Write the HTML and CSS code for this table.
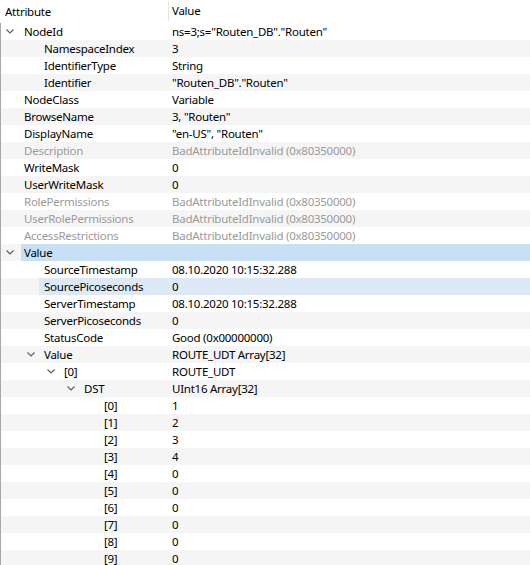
FILE: index.html
```html
<!DOCTYPE html>
<html>
<head>
<meta charset="utf-8">
<link rel="stylesheet" href="styles.css">
</head>
<body>
<div class="tree">
  <div class="header">
    <div class="hcell">Attribute</div>
    <div class="hcell hval">Value</div>
  </div>
  <div class="rows">
    <div class="row l0"><span class="gut"><svg class="chev" width="8" height="5" viewBox="0 0 8 5"><path d="M0.5 0.5 L4 4 L7.5 0.5"/></svg></span><div class="main"><span class="name">NodeId</span><span class="val">ns=3;s="Routen_DB"."Routen"</span></div></div>
    <div class="row l1 alt"><span class="gut"></span><div class="main"><span class="name">NamespaceIndex</span><span class="val">3</span></div></div>
    <div class="row l1"><span class="gut"></span><div class="main"><span class="name">IdentifierType</span><span class="val">String</span></div></div>
    <div class="row l1 alt"><span class="gut"></span><div class="main"><span class="name">Identifier</span><span class="val">"Routen_DB"."Routen"</span></div></div>
    <div class="row l0"><span class="gut"></span><div class="main"><span class="name">NodeClass</span><span class="val">Variable</span></div></div>
    <div class="row l0 alt"><span class="gut"></span><div class="main"><span class="name">BrowseName</span><span class="val">3, "Routen"</span></div></div>
    <div class="row l0"><span class="gut"></span><div class="main"><span class="name">DisplayName</span><span class="val">"en-US", "Routen"</span></div></div>
    <div class="row l0 alt dis"><span class="gut"></span><div class="main"><span class="name">Description</span><span class="val">BadAttributeIdInvalid (0x80350000)</span></div></div>
    <div class="row l0"><span class="gut"></span><div class="main"><span class="name">WriteMask</span><span class="val">0</span></div></div>
    <div class="row l0 alt"><span class="gut"></span><div class="main"><span class="name">UserWriteMask</span><span class="val">0</span></div></div>
    <div class="row l0 dis"><span class="gut"></span><div class="main"><span class="name">RolePermissions</span><span class="val">BadAttributeIdInvalid (0x80350000)</span></div></div>
    <div class="row l0 alt dis"><span class="gut"></span><div class="main"><span class="name">UserRolePermissions</span><span class="val">BadAttributeIdInvalid (0x80350000)</span></div></div>
    <div class="row l0 dis"><span class="gut"></span><div class="main"><span class="name">AccessRestrictions</span><span class="val">BadAttributeIdInvalid (0x80350000)</span></div></div>
    <div class="row l0 alt sel"><span class="gut"><svg class="chev" width="8" height="5" viewBox="0 0 8 5"><path d="M0.5 0.5 L4 4 L7.5 0.5"/></svg></span><div class="main"><span class="name">Value</span><span class="val"></span></div></div>
    <div class="row l1"><span class="gut"></span><div class="main"><span class="name">SourceTimestamp</span><span class="val">08.10.2020 10:15:32.288</span></div></div>
    <div class="row l1 alt hov"><span class="gut"></span><div class="main"><span class="name">SourcePicoseconds</span><span class="val">0</span></div></div>
    <div class="row l1"><span class="gut"></span><div class="main"><span class="name">ServerTimestamp</span><span class="val">08.10.2020 10:15:32.288</span></div></div>
    <div class="row l1 alt"><span class="gut"></span><div class="main"><span class="name">ServerPicoseconds</span><span class="val">0</span></div></div>
    <div class="row l1"><span class="gut"></span><div class="main"><span class="name">StatusCode</span><span class="val">Good (0x00000000)</span></div></div>
    <div class="row l1 alt"><span class="gut"><svg class="chev" width="8" height="5" viewBox="0 0 8 5"><path d="M0.5 0.5 L4 4 L7.5 0.5"/></svg></span><div class="main"><span class="name">Value</span><span class="val">ROUTE_UDT Array[32]</span></div></div>
    <div class="row l2"><span class="gut"><svg class="chev" width="8" height="5" viewBox="0 0 8 5"><path d="M0.5 0.5 L4 4 L7.5 0.5"/></svg></span><div class="main"><span class="name">[0]</span><span class="val">ROUTE_UDT</span></div></div>
    <div class="row l3 alt"><span class="gut"><svg class="chev" width="8" height="5" viewBox="0 0 8 5"><path d="M0.5 0.5 L4 4 L7.5 0.5"/></svg></span><div class="main"><span class="name">DST</span><span class="val">UInt16 Array[32]</span></div></div>
    <div class="row l4"><span class="gut"></span><div class="main"><span class="name">[0]</span><span class="val">1</span></div></div>
    <div class="row l4 alt"><span class="gut"></span><div class="main"><span class="name">[1]</span><span class="val">2</span></div></div>
    <div class="row l4"><span class="gut"></span><div class="main"><span class="name">[2]</span><span class="val">3</span></div></div>
    <div class="row l4 alt"><span class="gut"></span><div class="main"><span class="name">[3]</span><span class="val">4</span></div></div>
    <div class="row l4"><span class="gut"></span><div class="main"><span class="name">[4]</span><span class="val">0</span></div></div>
    <div class="row l4 alt"><span class="gut"></span><div class="main"><span class="name">[5]</span><span class="val">0</span></div></div>
    <div class="row l4"><span class="gut"></span><div class="main"><span class="name">[6]</span><span class="val">0</span></div></div>
    <div class="row l4 alt"><span class="gut"></span><div class="main"><span class="name">[7]</span><span class="val">0</span></div></div>
    <div class="row l4"><span class="gut"></span><div class="main"><span class="name">[8]</span><span class="val">0</span></div></div>
    <div class="row l4 alt"><span class="gut"></span><div class="main"><span class="name">[9]</span><span class="val">0</span></div></div>
  </div>
</div>
</body>
</html>
```

FILE: styles.css
```css
html, body {
  margin: 0;
  padding: 0;
  background: #fff;
}
body {
  font-family: "Noto Sans", "Open Sans", sans-serif;
  font-size: 11.5px;
  letter-spacing: -0.25px;
  color: #000;
  width: 530px;
  height: 565px;
  overflow: hidden;
}
.tree {
  display: flex;
  flex-direction: column;
}
.header {
  display: grid;
  grid-template-columns: 168px 1fr;
  height: 23px;
  align-items: center;
}
.hcell {
  padding-left: 5px;
  line-height: 23px;
  height: 23px;
}
.hval {
  border-left: 1px solid #e5e5e5;
  padding-left: 3px;
  height: 20px;
  line-height: 20px;
  align-self: start;
  margin-top: 1px;
}
.rows {
  border-left: 1px solid #a8a8a8;
}
.row {
  display: flex;
  height: 17px;
  line-height: 17px;
}
.row.alt {
  background: #f5f5f5;
}
.gut {
  flex: none;
  display: flex;
  align-items: center;
  justify-content: flex-start;
}
.chev {
  display: block;
  fill: none;
  stroke: #5a5a5a;
  stroke-width: 1.1;
}
.main {
  flex: 1;
  display: flex;
  padding-left: 3px;
  white-space: nowrap;
}
.name {
  flex: none;
}
.val {
  flex: 1;
}
.l0 .gut { width: 20px; }
.l1 .gut { width: 40px; }
.l2 .gut { width: 60px; }
.l3 .gut { width: 80px; }
.l4 .gut { width: 100px; }
.l0 .chev { margin-left: 5px; }
.l1 .chev { margin-left: 26px; }
.l2 .chev { margin-left: 46px; }
.l3 .chev { margin-left: 66px; }
.l0 .name { width: 148px; }
.l1 .name { width: 128px; }
.l2 .name { width: 108px; }
.l3 .name { width: 88px; }
.l4 .name { width: 68px; }
.row.sel .main {
  background: #c8e0f6;
}
.row.hov .main {
  background: #dde9f6;
  padding-left: 5px;
}
.row.hov .gut {
  width: 38px;
}
.dis {
  color: #9a9a9a;
}
```
